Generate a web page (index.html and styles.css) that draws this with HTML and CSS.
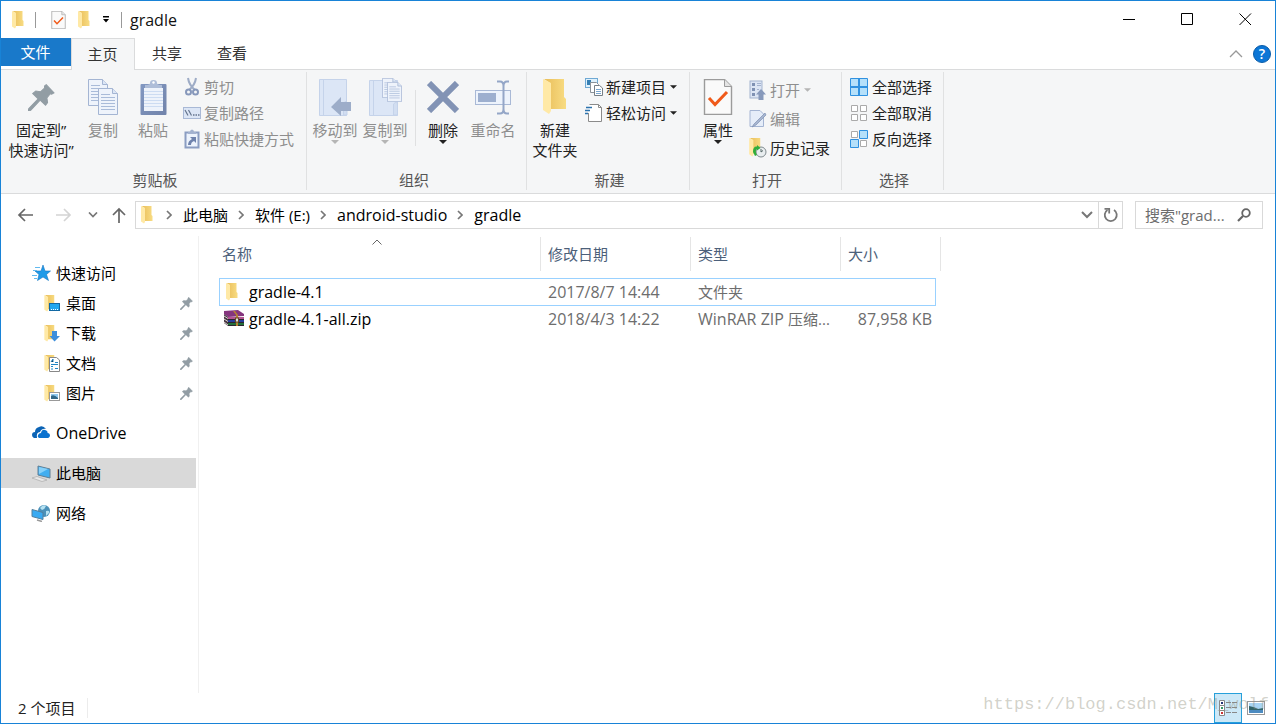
FILE: index.html
```html
<!DOCTYPE html>
<html lang="zh-CN">
<head>
<meta charset="utf-8">
<title>gradle</title>
<link rel="stylesheet" href="styles.css">
</head>
<body>
<svg class="defs" aria-hidden="true">
  <defs>
    <linearGradient id="gold" x1="0" x2="1"><stop offset="0" stop-color="#e9bd59"/><stop offset="1" stop-color="#f8dc83"/></linearGradient>
    <linearGradient id="clip" x1="0" y1="0" x2="1" y2="1"><stop offset="0" stop-color="#8298c2"/><stop offset="1" stop-color="#7183aa"/></linearGradient>
    <symbol id="folder" viewBox="0 0 24 36"><path d="M1 0H21V18L23 20V30H7V4Z" fill="url(#gold)"/><path d="M0 0L8 4V32L6 35L0 31Z" fill="#ffe9a6"/></symbol>
    <symbol id="pin" viewBox="90 40 80 80"><path d="M144 42L167 66L160 70L156 69L146 81L148 95L142 103L126 88L98 118L91 120L92 113L120 84L104 68L113 61L127 63L139 52L139 46Z" fill="#929da4" stroke="#929da4" stroke-width="3"/></symbol>
    <symbol id="check-doc" viewBox="0 0 30 36"><path d="M1.500 .5H21.500L28.500 7.500V35.500H1.500Z" fill="#fafafa" stroke="#9b9b9b" stroke-width="1.400"/><path d="M21.500 .5V7.500H28.500" fill="#e4e4e4" stroke="#9b9b9b"/><path d="M6 19L12 25.500L24 13" fill="none" stroke="#f05a1a" stroke-width="3"/></symbol>
    <symbol id="page" viewBox="0 0 20 27"><path d="M.5 .5H14.500L19.500 5.500V26.500H.5Z" fill="#eef3fb" stroke="#a4b5d3"/><path d="M14.500 .5V5.500H19.500" fill="#dce6f5" stroke="#a4b5d3"/><path d="M3 6.500H12M3 9.500H17M3 12.500H17M3 15.500H17M3 18.500H17M3 21.500H17" stroke="#a9bbd9"/></symbol>
    <symbol id="chevron" viewBox="0 0 6 10"><path d="M1 1L5 5L1 9" fill="none" stroke="#777" stroke-width="1.700"/></symbol>
    <symbol id="down" viewBox="0 0 8 4"><path d="M0 0H8L4 4Z" fill="currentColor"/></symbol>
  </defs>
</svg>

<div class="window">
  <header class="titlebar">
    <svg class="folder-s" role="img" aria-label="文件夹"><use href="#folder"/></svg>
    <span class="tick"></span>
    <button class="bare" aria-label="属性"><svg width="15" height="18"><use href="#check-doc"/></svg></button>
    <button class="bare" aria-label="新建文件夹"><svg class="folder-s"><use href="#folder"/></svg></button>
    <button class="bare" aria-label="自定义快速访问工具栏"><svg width="8" height="7" viewBox="0 0 8 7"><path d="M1 0H7V1.500H1ZM1 3H7L4 6.500Z"/></svg></button>
    <span class="tick"></span>
    <h1 class="title latin">gradle</h1>
    <div class="controls">
      <button aria-label="最小化"><svg width="13" height="13"><path d="M0 6.500H12" stroke="#000"/></svg></button>
      <button aria-label="最大化"><svg width="13" height="13"><path d="M.5 .5H11.500V11.500H.5Z" fill="none" stroke="#000"/></svg></button>
      <button aria-label="关闭"><svg width="13" height="13"><path d="M.5 .5L12 12M12 .5L.5 12" stroke="#000"/></svg></button>
    </div>
  </header>

  <nav class="tabs">
    <button class="tab file">文件</button>
    <button class="tab active">主页</button>
    <button class="tab">共享</button>
    <button class="tab">查看</button>
    <div class="tab-tools">
      <button class="bare" aria-label="折叠功能区"><svg width="14" height="8"><path d="M1 7L7 1L13 7" fill="none" stroke="#999" stroke-width="1.300"/></svg></button>
      <button class="help" aria-label="帮助">?</button>
    </div>
  </nav>

  <section class="ribbon" aria-label="功能区">
    <div class="group">
      <div class="tools">
        <button class="big wide"><span class="pic"><svg width="27" height="27"><use href="#pin"/></svg></span><span>固定到”<br>快速访问”</span></button>
        <button class="big off"><span class="pic"><svg width="31" height="37"><use href="#page" width="20" height="27"/><use href="#page" x="10" y="9" width="20" height="27"/></svg></span>复制</button>
        <button class="big off"><span class="pic"><svg width="27" height="37"><rect x=".5" y="5" width="26" height="31" rx="1" fill="url(#clip)"/><rect x="4" y="9" width="19" height="23" fill="#eef3fb"/><path d="M4 12.500H23M4 15.500H23M4 18.500H23M4 21.500H23M4 24.500H23M4 27.500H23" stroke="#cddcf2"/><path d="M5 9V6Q10 6 10 4Q10 1 13.500 1T17 4Q17 6 22 6V9Z" fill="#aebdd8"/><circle cx="13.500" cy="3.500" r="1.200" fill="#fff"/></svg></span>粘贴</button>
        <div class="rows">
          <button class="small off"><svg class="ic" viewBox="0 0 18 20"><path d="M5 1Q6 8 12 13M13 1Q12 8 6 13" fill="none" stroke="#9eacc6" stroke-width="2"/><circle cx="5.500" cy="15" r="2.500" fill="none" stroke="#8798bb" stroke-width="2"/><circle cx="12.500" cy="15" r="2.500" fill="none" stroke="#8798bb" stroke-width="2"/></svg>剪切</button>
          <button class="small off"><svg class="ic" viewBox="0 0 18 20"><rect x=".5" y="4.500" width="17" height="11" fill="#dce6f6" stroke="#a9b9d6"/><path d="M2 7L5 12.500M5.500 7L8.500 12.500" stroke="#65758f" stroke-width="1.200"/><path d="M10 12H11.500M12.500 12H14M15 12H16.500" stroke="#65758f" stroke-width="1.500"/></svg>复制路径</button>
          <button class="small off"><svg class="ic" viewBox="0 0 18 20"><rect x="2.500" y="3.500" width="13" height="15" fill="#edf3fc" stroke="#8b9dc2" stroke-width="2"/><path d="M5 5V3H7Q7 .5 9 .5T11 3H13V5Z" fill="#a3b2cf"/><path d="M7 8H13V14L11 12Q8 13 8 16H5Q5 12 9 10Z" fill="#6f83ad"/></svg>粘贴快捷方式</button>
        </div>
      </div>
      <h2>剪贴板</h2>
    </div>

    <div class="group organize">
      <div class="tools">
        <button class="big off"><span class="pic"><svg width="33" height="37"><path d="M.5 .5H27.500V36.500H.5Z" fill="#dce6f6" stroke="#c5d3ea"/><path d="M4.500 1V36M24.500 36V24Q28 21 28 25V36Z" fill="#d2def1" stroke="#c5d3ea"/><path d="M12 28L22 18V23H32V32H22V37Z" fill="#9dadc9"/></svg></span>移动到<svg class="arrow"><use href="#down"/></svg></button>
        <button class="big off"><span class="pic"><svg width="33" height="38"><path d="M.5 2.500H28.500V37.500H.5Z" fill="#dce6f6" stroke="#c5d3ea"/><path d="M4.500 3V37M24.500 37V26Q28.500 22 28.500 27V37Z" fill="#d2def1" stroke="#c5d3ea"/><use href="#page" x="13" y="0" width="15" height="20"/><use href="#page" x="18" y="4" width="15" height="20"/></svg></span>复制到<svg class="arrow"><use href="#down"/></svg></button>
        <span class="divider"></span>
        <button class="big"><span class="pic"><svg width="32" height="32"><path d="M2 2L30 30M30 2L2 30" stroke="#8293b5" stroke-width="6"/></svg></span>删除<svg class="arrow"><use href="#down"/></svg></button>
        <button class="big off"><span class="pic"><svg width="37" height="35"><rect x=".5" y="10.500" width="35" height="14" fill="#edf3fc" stroke="#a9b9d6"/><rect x="3" y="13" width="18" height="9" fill="#9dafcf"/><path d="M22 1.500H25Q28.500 1.500 28.500 6V29Q28.500 33.500 25 33.500H22M34 1.500H32Q28.500 1.500 28.500 6M28.500 29Q28.500 33.500 32 33.500H34" fill="none" stroke="#94a6c7" stroke-width="2"/></svg></span>重命名</button>
      </div>
      <h2>组织</h2>
    </div>

    <div class="group">
      <div class="tools">
        <button class="big"><span class="pic"><svg width="24" height="36"><use href="#folder"/></svg></span><span>新建<br>文件夹</span></button>
        <div class="rows">
          <button class="small"><svg class="ic" viewBox="0 0 18 20"><rect x=".5" y="1.500" width="12" height="9" fill="#dff1fc" stroke="#6fa9d4"/><rect x="2" y="3" width="4" height="5" fill="#367fb4"/><path d="M5.500 5.500H11.500L13.500 7.500V15.500H5.500Z" fill="#fff" stroke="#8b9299"/><path d="M9.500 8.500H14.500L17.500 11V18.500H9.500Z" fill="#fff" stroke="#777f87"/><path d="M11 12.500H16M11 14.500H16M11 16.500H16" stroke="#7aa6ce"/></svg>新建项目<svg class="arrow"><use href="#down"/></svg></button>
          <button class="small"><svg class="ic" viewBox="0 0 18 20"><path d="M4.500 1.500H13.500L16.500 4.500V18.500H3.500V10" fill="#fff" stroke="#8b8b8b"/><path d="M13.500 1.500V4.500H16.500" fill="none" stroke="#8b8b8b"/><path d="M1 4.500H7M0 7.500H5M0 10.500H3" stroke="#2c73ae" stroke-width="1.500"/></svg>轻松访问<svg class="arrow"><use href="#down"/></svg></button>
        </div>
      </div>
      <h2>新建</h2>
    </div>

    <div class="group">
      <div class="tools">
        <button class="big"><span class="pic"><svg width="30" height="36"><use href="#check-doc"/></svg></span>属性<svg class="arrow"><use href="#down"/></svg></button>
        <div class="rows airy">
          <button class="small off"><svg class="ic" viewBox="0 0 18 20"><rect x="1" y="1" width="12" height="17" fill="#dce5f4" stroke="#a4b3cf"/><path d="M3 3H6V6H3ZM3 8H6V11H3ZM3 13H6V16H3Z" fill="#7f91b3"/><path d="M8 3.500H12M8 5.500H12M8 9.500H10" stroke="#a4b3cf"/><path d="M12 9L17 14.500H14.500V20H9.500V14.500H7Z" fill="#8799bb"/></svg>打开<svg class="arrow"><use href="#down"/></svg></button>
          <button class="small off"><svg class="ic" viewBox="0 0 18 20"><path d="M1 1.500H11L14.500 5V17.500H1Z" fill="#e5edf9" stroke="#a4b5d3"/><path d="M16 4L5 15L3 18L7 16L17 6Z" fill="#a7b6d0" stroke="#7e90b3" stroke-width=".7"/></svg>编辑</button>
          <button class="small"><svg class="ic" viewBox="0 0 18 20"><use href="#folder" x="0" y="0" width="13" height="19"/><circle cx="12" cy="14" r="5" fill="#e8edef" stroke="#808a8e"/><path d="M12 11V14L14 12.500" fill="none" stroke="#566"/><path d="M4 14Q4 8 8 8.500V7L11.500 10L8 12.500V11Q6.500 11 7 15L8 17L6 18Z" fill="#2fae3b"/></svg>历史记录</button>
        </div>
      </div>
      <h2>打开</h2>
    </div>

    <div class="group">
      <div class="tools">
        <div class="rows select">
          <button class="small"><svg class="ic" viewBox="0 0 18 20"><path d="M.5 1.500H17.500V18.500H.5Z" fill="#b5e0fa" stroke="#3091e0"/><path d="M9 1V19M0 10H18" stroke="#3091e0" stroke-width="2"/></svg>全部选择</button>
          <button class="small"><svg class="ic" viewBox="0 0 18 20"><path d="M1.500 2.500H7.500V8.500H1.500ZM10.500 2.500H16.500V8.500H10.500ZM1.500 11.500H7.500V17.500H1.500ZM10.500 11.500H16.500V17.500H10.500Z" fill="#fff" stroke="#aaa"/></svg>全部取消</button>
          <button class="small"><svg class="ic" viewBox="0 0 18 20"><path d="M1.500 2.500H7.500V8.500H1.500ZM10.500 11.500H16.500V17.500H10.500Z" fill="#fff" stroke="#aaa"/><path d="M9.500 1.500H17.500V9.500H9.500ZM.5 10.500H8.500V18.500H.5Z" fill="#b5e0fa" stroke="#3091e0"/></svg>反向选择</button>
        </div>
      </div>
      <h2>选择</h2>
    </div>
  </section>

  <div class="navbar">
    <div class="history">
      <button class="bare" aria-label="后退"><svg width="16" height="14"><path d="M16 7H2M8 1L2 7L8 13" fill="none" stroke="#666" stroke-width="1.700"/></svg></button>
      <button class="bare" aria-label="前进"><svg width="16" height="14"><path d="M0 7H14M8 1L14 7L8 13" fill="none" stroke="#d4d4d4" stroke-width="1.700"/></svg></button>
      <button class="bare" aria-label="最近位置"><svg width="10" height="6"><path d="M1 .5L5 4.500L9 .5" fill="none" stroke="#777" stroke-width="1.700"/></svg></button>
      <button class="bare" aria-label="上移"><svg width="14" height="16"><path d="M7 16V2M1 8L7 2L13 8" fill="none" stroke="#666" stroke-width="1.700"/></svg></button>
    </div>
    <div class="address">
      <svg class="folder-s"><use href="#folder"/></svg>
      <svg class="chev"><use href="#chevron"/></svg><a href="#pc">此电脑</a>
      <svg class="chev"><use href="#chevron"/></svg><a href="#e">软件 (E:)</a>
      <svg class="chev"><use href="#chevron"/></svg><a class="latin" href="#as">android-studio</a>
      <svg class="chev"><use href="#chevron"/></svg><a class="latin" href="#gradle">gradle</a>
      <button class="bare drop" aria-label="以前的位置"><svg width="12" height="8"><path d="M1 1L6 6L11 1" fill="none" stroke="#777" stroke-width="2"/></svg></button>
      <button class="refresh" aria-label="刷新"><svg width="16" height="16"><path d="M11 3A6 6 0 1 1 4.500 3" fill="none" stroke="#777" stroke-width="1.800"/><path d="M1.500 1.800H6.200V6.500" fill="none" stroke="#777" stroke-width="1.800"/></svg></button>
    </div>
    <div class="search">
      <input type="text" aria-label="搜索" placeholder="搜索&quot;grad...">
      <svg width="14" height="14"><circle cx="9" cy="5" r="3.800" fill="none" stroke="#666" stroke-width="1.800"/><path d="M6 8L1 13" stroke="#666" stroke-width="2.200"/></svg>
    </div>
  </div>

  <div class="body">
    <aside class="sidebar">
      <a class="item" href="#quick"><svg class="si" viewBox="0 0 20 18"><path d="M12 1L14 7H19.500L15.500 10.500L17.500 16.500L12 13L6.500 16.500L8 10.500L4 7H10Z" fill="#1e9ae8" stroke="#1576c2" stroke-width=".6"/><path d="M4 3.500H9M2 6.500H6M1 11.500H6M3 14.500H6" stroke="#62b9ef"/></svg>快速访问</a>
      <a class="item sub" href="#desk"><svg class="si" viewBox="0 0 20 18"><use href="#folder" x="3" y="1" width="12" height="17"/><rect x="8.500" y="9.500" width="10" height="7" fill="#20a6ef" stroke="#1268a3"/><path d="M10 15.500H17" stroke="#fff" stroke-dasharray="1 1"/></svg>桌面<svg class="pinned"><use href="#pin"/></svg></a>
      <a class="item sub" href="#down-dir"><svg class="si" viewBox="0 0 20 18"><use href="#folder" x="3" y="1" width="12" height="17"/><path d="M11 7H16V12H19L13.500 17.500L8.500 12H11Z" fill="#3c8edc"/></svg>下载<svg class="pinned"><use href="#pin"/></svg></a>
      <a class="item sub" href="#docs"><svg class="si" viewBox="0 0 20 18"><use href="#folder" x="3" y="1" width="12" height="17"/><path d="M8.500 3.500H15.500L18.500 6V17.500H8.500Z" fill="#fff" stroke="#888"/><path d="M10 8L12 5V8M10 10.500H17M10 12.500H12M14 8.500H17M10 15H12M14 14.500H17" stroke="#2286c5"/></svg>文档<svg class="pinned"><use href="#pin"/></svg></a>
      <a class="item sub" href="#pics"><svg class="si" viewBox="0 0 20 18"><use href="#folder" x="3" y="1" width="12" height="17"/><rect x="8.500" y="8.500" width="10" height="8" fill="#fff" stroke="#999"/><path d="M10 10H17V15H10Z" fill="#91c9ef"/><path d="M10 12Q13 10 17 14V15H10Z" fill="#326787"/></svg>图片<svg class="pinned"><use href="#pin"/></svg></a>
      <a class="item apart" href="#onedrive"><svg class="si" viewBox="0 0 20 18"><path d="M6 14H3Q1 13 1 11Q1 8 4 8Q4 4 8 3Q12 1 15 5Q11 4 9 8Q5 8 6 14Z" fill="#0b63b5"/><path d="M8 14Q6 13 7 11Q8 9 10 9Q11 5 14 6Q17 7 16.500 9Q19 9 19 12Q18 14 17 14Z" fill="#0b72cf"/></svg><span class="latin">OneDrive</span></a>
      <a class="item apart current" href="#pc"><svg class="si" viewBox="0 0 20 18"><path d="M7 2L19 5V14L7 11Z" fill="#42aef0" stroke="#607f94"/><path d="M8 3L17 5L8 10Z" fill="#86d1fa"/><path d="M1 14L6 12.500L16 16L11 17.500Z" fill="#e8e8e8" stroke="#aaa" stroke-width=".7"/></svg>此电脑</a>
      <a class="item apart" href="#net"><svg class="si" viewBox="0 0 20 18"><circle cx="13" cy="7" r="6" fill="#4b91b9"/><path d="M9 4Q12 0 15 2Q14 5 11 6ZM15 7Q19 6 18 9L15 12Z" fill="#b6e2f2"/><path d="M1 5.500L12 8.500V15.500L1 12.500Z" fill="#38aaf2" stroke="#527f9d"/><path d="M6 16L11 17.500" stroke="#999" stroke-width="1.500"/></svg>网络</a>
    </aside>

    <main class="files">
      <table>
        <colgroup><col class="c-name"><col class="c-mid"><col class="c-mid"><col class="c-size"><col class="c-end"></colgroup>
        <thead>
          <tr>
            <th aria-sort="ascending">名称<svg class="sort" width="10" height="6"><path d="M.5 5.500L5 1L9.500 5.500" fill="none" stroke="#666"/></svg></th>
            <th>修改日期</th><th>类型</th><th colspan="2">大小</th>
          </tr>
        </thead>
        <tbody>
          <tr class="focus">
            <td class="name latin"><div class="cell"><svg class="fi" viewBox="0 0 21 18"><use href="#folder" x="2" y="0" width="14" height="18"/></svg>gradle-4.1</div></td>
            <td class="latin">2017/8/7 14:44</td><td>文件夹</td><td></td><td></td>
          </tr>
          <tr>
            <td class="name latin"><div class="cell"><svg class="fi" viewBox="0 0 21 18"><path d="M1 1L15 0L21 4V6L5 7L1 4Z" fill="#85357e"/><path d="M1 4L5 7V16L1 13Z" fill="#453541"/><path d="M5 7H21V9H5Z" fill="#b45392"/><path d="M5 9H21V12H5Z" fill="#263d9d"/><path d="M5 12H21V16H5Z" fill="#23703a"/><path d="M1 6L5 8.500M1 9L5 11.500M1 12L5 15" stroke="#ded9d3"/><path d="M5 9.500H21M5 12.500H21M5 15.500H21" stroke="#2b2430"/><path d="M10 1L13 5V16H15V5L12 1Z" fill="#b58332"/><rect x="12.500" y="8" width="3" height="4" fill="#ddd" stroke="#664a26"/></svg>gradle-4.1-all.zip</div></td>
            <td class="latin">2018/4/3 14:22</td><td><span class="latin">WinRAR ZIP </span>压缩...</td><td class="num latin">87,958 KB</td><td></td>
          </tr>
        </tbody>
      </table>
    </main>
  </div>

  <footer class="status">
    <span class="count">2 个项目</span>
    <div class="views">
      <button class="view on" aria-label="详细信息"><svg width="18" height="16"><path d="M.5 .5H5.500V5.500H.5ZM.5 5.500H5.500V10.500H.5ZM.5 10.500H5.500V15.500H.5Z" fill="#fff" stroke="#888"/><path d="M2 3H4" stroke="#237" stroke-width="2"/><path d="M2 8H4" stroke="#396" stroke-width="2"/><path d="M2 13H4" stroke="#c33" stroke-width="2"/><path d="M7 2.500H12M13 2.500H18M7 7.500H12M13 7.500H18M7 12.500H12M13 12.500H18" stroke="#888"/></svg></button>
      <button class="view" aria-label="大图标"><svg width="18" height="14"><rect x=".5" y=".5" width="17" height="13" fill="#fff" stroke="#999"/><path d="M2 2H16V12H2Z" fill="#a8d5f5"/><path d="M2 5Q8 6 11 8L16 7V10H2Z" fill="#31646a"/><path d="M2 9H16V12H2Z" fill="#4d8bc0"/></svg></button>
    </div>
    <span class="watermark">https://blog.csdn.net/M_wolf</span>
  </footer>
</div>
</body>
</html>
```
FILE: styles.css
```css
* { box-sizing: border-box; }

body {
  margin: 0;
  font: 15px/20px "Open Sans", "Noto Sans CJK SC", sans-serif;
  color: #000;
  background: #fff;
}

button, input { font: inherit; color: inherit; border: 0; background: none; padding: 0; margin: 0; }
a { color: inherit; text-decoration: none; }
h1, h2 { margin: 0; font: inherit; }
svg { display: block; flex: none; }

.defs { position: absolute; width: 0; height: 0; }
.latin, h1.latin { font-size: 16px; }
.bare { display: flex; align-items: center; }
.folder-s { width: 12px; height: 18px; }

.window {
  display: flex;
  flex-direction: column;
  min-height: 100vh;
  border: 1px solid #1883d7;
  position: relative;
}

/* Title bar */
.titlebar { display: flex; align-items: center; height: 37px; padding: 0 1px 0 11px; }
.tick { width: 1px; height: 16px; background: #999; margin: 0 8px 0 11px; }
.titlebar .bare { margin-left: 7px; }
.titlebar .bare + .bare { margin-left: 12px; }
.title { color: #111; }
.controls { display: flex; margin-left: auto; height: 100%; }
.controls button { width: 58px; display: grid; place-items: center; }

/* Tabs */
.tabs { display: flex; height: 32px; border-bottom: 1px solid #dadbdc; }
.tab { width: 65px; height: 31px; color: #333; padding: 0 1px 1px 0; }
.tab.file { width: 70px; height: 28px; background: #1979ca; color: #fff; }
.tab.active { width: 64px; height: 32px; background: #f5f6f7; border: 1px solid #dadbdc; border-bottom: 0; padding-bottom: 2px; }
.tab-tools { display: flex; align-items: center; gap: 10px; margin-left: auto; padding-right: 4px; }
.help {
  width: 18px; height: 18px; border-radius: 50%;
  background: #0c76d6; color: #fff; border: 1px solid #0a5ca8;
  font-size: 14px; line-height: 16px; font-weight: 600;
}

/* Ribbon */
.ribbon { display: flex; background: #f5f6f7; border-bottom: 1px solid #dadbdc; height: 124px; padding: 2px 0 3px; }
.group { display: flex; flex-direction: column; justify-content: space-between; padding-left: 3px; border-right: 1px solid #e0e1e2; }
.group.organize { padding-right: 8px; }
.group h2 { text-align: center; color: #555; }
.tools { display: flex; align-items: flex-start; }
.big { width: 50px; display: flex; flex-direction: column; align-items: center; color: #222; white-space: nowrap; padding-top: 2px; }
.big.wide { width: 74px; }
.pic { display: grid; place-items: center; height: 46px; }
.arrow { width: 8px; height: 4px; }
.off { color: #8e8e8e; }
.off .arrow { color: #b5b5b5; }
.divider { width: 1px; height: 56px; margin: 18px 2px 0 5px; background: #dfe0e1; }
.rows { display: flex; flex-direction: column; margin: 2px 12px 0 5px; }
.rows.airy { margin: 5px 11px 0 6px; gap: 3px; }
.rows.select { margin-right: 11px; }
.small { display: flex; align-items: center; gap: 3px; height: 26px; white-space: nowrap; }
.small:not(.off) { color: #222; }
.small .arrow { width: 7px; margin-left: 1px; }
.ic { width: 18px; height: 20px; }
.select .small { gap: 4px; }

/* Navigation bar */
.navbar { display: flex; align-items: center; height: 42px; padding: 0 12px 0 16px; }
.history { display: flex; align-items: center; margin-right: 9px; }
.history .bare:nth-child(2) { margin-left: 23px; }
.history .bare:nth-child(3) { margin-left: 16px; }
.history .bare:nth-child(4) { margin-left: 14px; }
.address { display: flex; align-items: center; flex: 1; height: 28px; border: 1px solid #d9d9d9; padding-left: 5px; white-space: nowrap; }
.chev { width: 6px; height: 10px; margin: 0 11px 0 10px; }
.folder-s + .chev { margin-left: 13px; }
.drop { margin-left: auto; margin-right: 5px; }
.refresh { display: grid; place-items: center; width: 24px; height: 26px; border-left: 1px solid #d9d9d9; }
.search { display: flex; align-items: center; width: 128px; height: 28px; margin-left: 12px; padding: 0 11px 0 9px; border: 1px solid #d9d9d9; }
.search input { flex: 1; min-width: 0; outline: 0; }
.search input::placeholder { color: #6d6d6d; opacity: 1; }

/* Body */
.body { display: flex; flex: 1; }
.sidebar { width: 198px; border-right: 1px solid #f0f0f0; padding: 22px 2px 0 0; }
.item { display: flex; align-items: center; height: 30px; padding-left: 30px; gap: 5px; }
.item.sub { padding-left: 40px; }
.item.apart { margin-top: 10px; }
.item.current { background: #d9d9d9; }
.si { width: 20px; height: 18px; }
.pinned { width: 13px; height: 13px; margin: 0 3px 0 auto; }

.files { flex: 1; padding: 1px 0 0 20px; }
table { border-collapse: separate; border-spacing: 0; table-layout: fixed; width: 722px; }
.c-name { width: 322px; }
.c-mid { width: 150px; }
.c-size { width: 95px; }
.c-end { width: 5px; }
th { position: relative; height: 34px; padding: 0 0 0 7px; text-align: left; font-weight: 400; color: #4c607a; border-right: 1px solid #e5e5e5; }
th:first-child { padding-left: 3px; }
.sort { position: absolute; left: 153px; top: 2px; }
td { height: 26px; padding: 0 0 0 7px; color: #6d6d6d; white-space: nowrap; }
td.name { padding-left: 4px; color: #000; }
td.num { text-align: right; padding: 0 4px 0 0; }
.cell { display: flex; align-items: center; gap: 5px; }
.fi { width: 21px; height: 18px; }
thead::after { content: ""; display: table-row; height: 7px; }
.focus td { border: 0 solid #99d1ff; border-width: 1px 0; height: 28px; }
.focus td:first-child { border-left-width: 1px; padding-left: 3px; }
.focus td:nth-child(4) { border-right-width: 1px; }
.focus td:last-child { border: 0; }

/* Status bar */
.status { display: flex; align-items: center; height: 30px; padding: 0 5px 0 17px; color: #222; }
.count { padding-right: 12px; border-right: 1px solid #ececec; }
.views { display: flex; margin-left: auto; height: 100%; }
.view { width: 28px; display: grid; place-items: center; }
.view.on { background: #cce8f7; border: 1px solid #26a0da; }
.watermark {
  position: absolute; right: 6px; bottom: 6px;
  font: 17px/24px "Liberation Mono", monospace;
  color: rgba(140, 140, 120, .4);
  pointer-events: none;
}
```
